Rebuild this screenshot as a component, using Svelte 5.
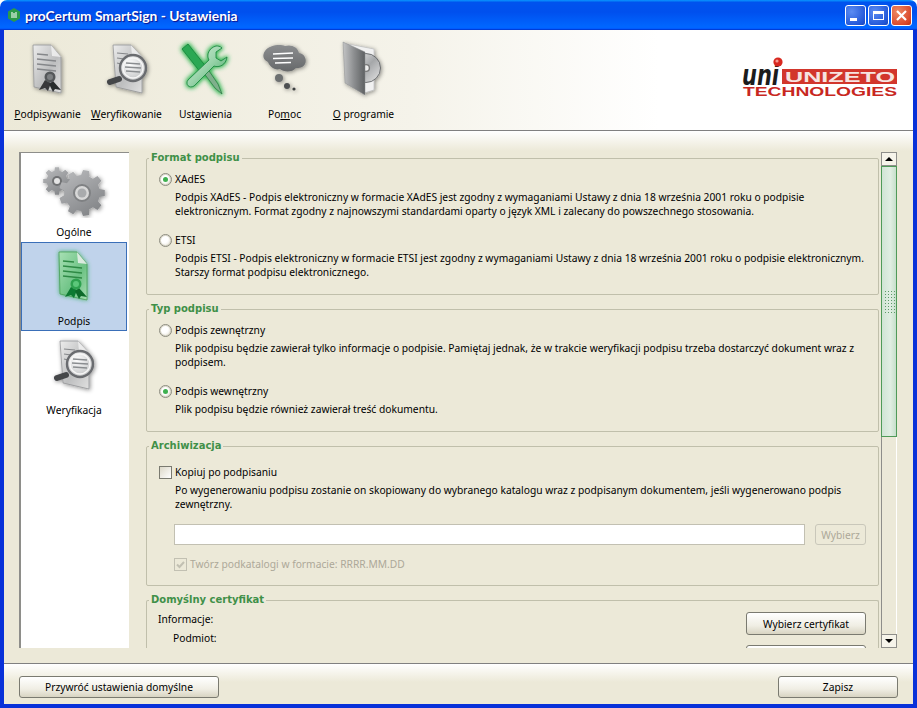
<script>
  const tools = [
    { pre: '', key: 'P', post: 'odpisywanie', icon: 'sign' },
    { pre: '', key: 'W', post: 'eryfikowanie', icon: 'verify' },
    { pre: 'Ust', key: 'a', post: 'wienia', icon: 'tools' },
    { pre: 'Po', key: 'm', post: 'oc', icon: 'help' },
    { pre: '', key: 'O', post: ' programie', icon: 'about' }
  ];

  const sideItems = [
    { label: 'Ogólne', icon: 'gears' },
    { label: 'Podpis', icon: 'sign', selected: true },
    { label: 'Weryfikacja', icon: 'verify' }
  ];

  // Builds a cog outline from tooth count and radii
  function gear(cx, cy, n, outer, inner) {
    const step = (Math.PI * 2) / n;
    const pts = [];
    for (let i = 0; i < n; i++) {
      const a = i * step;
      const at = (r, d) => {
        const x = cx + r * Math.cos(a + d * step);
        const y = cy + r * Math.sin(a + d * step);
        return x.toFixed(1) + ' ' + y.toFixed(1);
      };
      pts.push(at(inner, -0.32), at(outer, -0.19), at(outer, 0.19), at(inner, 0.32));
    }
    return 'M' + pts.join('L') + 'Z';
  }
</script>

{#snippet page(fill, edge, line)}
  <path d="M15 5H33L43 17V53L16 47Z" fill="url(#{fill})" stroke={edge} stroke-width="0.7" />
  <path d="M33 5L34 16L43 17Z" fill="#f4f4f4" opacity="0.8" />
  <g stroke={line} stroke-width="1.3" fill="none">
    <path d="M19 14L30 15" />
    <path d="M19 19L38 21" />
    <path d="M19 24L38 26" />
    <path d="M19 29L38 31" />
  </g>
{/snippet}

{#snippet signIcon(green)}
  <svg class="ico" viewBox="0 0 60 60" width="60" height="60">
    <g filter={green ? 'url(#glow)' : 'url(#shadow)'}>
      {@render page(green ? 'pageGreen' : 'pageGrey', green ? '#3f9a4e' : '#8b8d8f', green ? '#2f8a45' : '#85878a')}
      <path d="M27 40L21 50L27 48L30 51L33 43Z" fill={green ? '#0e7a32' : '#37393b'} />
      <path d="M35 41L43 50L37 49L35 52L31 44Z" fill={green ? '#0a6a2a' : '#2b2d2f'} />
      <circle cx="32" cy="37" r="5.5" fill={green ? '#2ea150' : '#55585a'} />
      <circle cx="32" cy="37" r="3" fill={green ? '#5cc77a' : '#7d8082'} />
    </g>
  </svg>
{/snippet}

{#snippet verifyIcon()}
  <svg class="ico" viewBox="0 0 60 60" width="60" height="60">
    <g filter="url(#shadow)">
      <path d="M16 5H34L45 17V53L19 47Z" fill="url(#pageGrey)" stroke="#8b8d8f" stroke-width="0.7" />
      <path d="M34 5L35 16L45 17Z" fill="#f4f4f4" opacity="0.8" />
      <g stroke="#85878a" stroke-width="1.2" fill="none">
        <path d="M20 13L31 14" />
        <path d="M20 18L27 19" />
        <path d="M20 23L24 24" />
      </g>
      <path d="M22 39L13 42" stroke="#45474a" stroke-width="6" stroke-linecap="round" />
      <circle cx="36" cy="28" r="13" fill="url(#lens)" stroke="#6a6c6f" stroke-width="2.4" />
      <circle cx="36" cy="28" r="10" fill="none" stroke="#f6f6f6" stroke-width="1.4" />
      <g stroke="#8a8d90" stroke-width="1.3" fill="none">
        <path d="M29 23L43 24" />
        <path d="M28 27L44 28" />
        <path d="M29 31L43 32" />
      </g>
    </g>
  </svg>
{/snippet}

{#snippet toolsIcon()}
  <svg class="ico" viewBox="0 0 60 60" width="60" height="60">
    <g filter="url(#glowWide)">
      <path d="M12 4L6 9L25 33L31 28Z" fill="#2aa853" stroke="#17813b" stroke-width="0.8" />
      <path d="M29 30L31 28L42 44L46 54L39 48L27 32Z" fill="#7fb08c" stroke="#2d7c45" stroke-width="0.8" />
      <path d="M40 6C33 8 30 15 33 20L12 40C9 44 13 49 18 46L38 26C43 28 50 25 51 17L45 21L40 18L40 12L46 8C44 6 42 6 40 6Z" fill="url(#toolGreen)" stroke="#17813b" stroke-width="0.8" />
    </g>
  </svg>
{/snippet}

{#snippet helpIcon()}
  <svg class="ico" viewBox="0 0 60 60" width="60" height="60">
    <g filter="url(#shadow)">
      <path d="M10 11C14 5 25 4 30 6C36 4 43 7 44 13C50 14 52 20 50 24C48 28 44 28 41 28C37 33 28 32 25 29C20 31 14 26 13 22C8 20 7 15 10 11Z" fill="url(#cloud)" />
      <g stroke="#fff" stroke-width="1.5" fill="none">
        <path d="M18 14L38 13" />
        <path d="M18 18.5L38 18" />
        <path d="M20 23L36 22.5" />
      </g>
      <circle cx="24" cy="38" r="4" fill="#6d6f71" />
      <circle cx="32" cy="46" r="3" fill="#4d4f51" />
      <circle cx="39" cy="49" r="1.6" fill="#3d3f41" />
    </g>
  </svg>
{/snippet}

{#snippet aboutIcon()}
  <svg class="ico" viewBox="0 0 60 60" width="60" height="60">
    <g filter="url(#shadow)">
      <path d="M14 4L40 9V50L30 53Z" fill="#f1f1f1" stroke="#a9abad" stroke-width="0.5" />
      <circle cx="32" cy="28" r="14.5" fill="url(#disc)" stroke="#55585a" stroke-width="0.8" />
      <circle cx="32" cy="28" r="3.4" fill="#eee" stroke="#777" stroke-width="1.4" />
      <path d="M9 2L31 12V55L11 43Z" fill="url(#folder)" stroke="#8b8d8f" stroke-width="0.5" />
    </g>
  </svg>
{/snippet}

{#snippet gearsIcon()}
  <svg class="ico" viewBox="0 0 72 60" width="72" height="60">
    <g filter="url(#shadow)">
      <path d={gear(19, 23, 8, 14, 10.5)} fill="url(#gearFill)" />
      <circle cx="19" cy="23" r="5" fill="#6f7173" />
      <circle cx="19" cy="23" r="3" fill="#e4e4e4" />
      <path d={gear(44, 35, 9, 23, 18)} fill="url(#gearFill)" />
      <circle cx="44" cy="35" r="8" fill="#d8d8d8" stroke="#7f8183" stroke-width="2" />
      <circle cx="44" cy="35" r="4.5" fill="#a9abad" />
    </g>
  </svg>
{/snippet}

<div class="window">
  <svg class="defs" width="0" height="0" aria-hidden="true">
    <defs>
      <linearGradient id="pageGrey" x1="0" y1="0" x2="1" y2="1">
        <stop offset="0" stop-color="#ececec" />
        <stop offset="0.55" stop-color="#bdbebf" />
        <stop offset="1" stop-color="#e0e0e0" />
      </linearGradient>
      <linearGradient id="pageGreen" x1="0" y1="0" x2="1" y2="1">
        <stop offset="0" stop-color="#a8e0b4" />
        <stop offset="0.6" stop-color="#6cc284" />
        <stop offset="1" stop-color="#a6dcb2" />
      </linearGradient>
      <radialGradient id="lens" cx="0.4" cy="0.35" r="0.8">
        <stop offset="0" stop-color="#ffffff" />
        <stop offset="1" stop-color="#b4b6b8" />
      </radialGradient>
      <linearGradient id="toolGreen" x1="0" y1="0" x2="1" y2="1">
        <stop offset="0" stop-color="#d6eedb" />
        <stop offset="0.5" stop-color="#9ad4ab" />
        <stop offset="1" stop-color="#3aa25c" />
      </linearGradient>
      <linearGradient id="cloud" x1="0" y1="0" x2="0" y2="1">
        <stop offset="0" stop-color="#8b8d8f" />
        <stop offset="1" stop-color="#66686a" />
      </linearGradient>
      <linearGradient id="disc" x1="0" y1="0" x2="1" y2="1">
        <stop offset="0" stop-color="#f2f2f2" />
        <stop offset="0.5" stop-color="#a5a7a9" />
        <stop offset="1" stop-color="#e6e6e6" />
      </linearGradient>
      <linearGradient id="folder" x1="0" y1="0" x2="1" y2="0">
        <stop offset="0" stop-color="#c3c4c5" />
        <stop offset="0.5" stop-color="#8c8e90" />
        <stop offset="1" stop-color="#5e6062" />
      </linearGradient>
      <linearGradient id="gearFill" x1="0" y1="0" x2="0.6" y2="1">
        <stop offset="0" stop-color="#bcbdbf" />
        <stop offset="1" stop-color="#85878a" />
      </linearGradient>
      <filter id="shadow" x="-30%" y="-30%" width="160%" height="160%">
        <feGaussianBlur in="SourceAlpha" stdDeviation="2" result="b" />
        <feFlood flood-color="#000" flood-opacity="0.45" />
        <feComposite in2="b" operator="in" />
        <feOffset dx="1" dy="1" />
        <feMerge>
          <feMergeNode />
          <feMergeNode in="SourceGraphic" />
        </feMerge>
      </filter>
      <filter id="glow" x="-30%" y="-30%" width="160%" height="160%">
        <feGaussianBlur in="SourceAlpha" stdDeviation="2" result="b" />
        <feFlood flood-color="#1fa63f" flood-opacity="0.8" />
        <feComposite in2="b" operator="in" />
        <feMerge>
          <feMergeNode />
          <feMergeNode in="SourceGraphic" />
        </feMerge>
      </filter>
      <filter id="glowWide" x="-30%" y="-30%" width="160%" height="160%">
        <feMorphology in="SourceAlpha" operator="dilate" radius="1" />
        <feGaussianBlur stdDeviation="2.2" result="b" />
        <feFlood flood-color="#20b045" flood-opacity="0.95" />
        <feComposite in2="b" operator="in" />
        <feMerge>
          <feMergeNode />
          <feMergeNode in="SourceGraphic" />
        </feMerge>
      </filter>
    </defs>
  </svg>

  <header class="titlebar">
    <svg class="appicon" viewBox="0 0 14 14" width="14" height="14">
      <path d="M7 0L13 3.5V10.5L7 14L1 10.5V3.5Z" fill="#2c9a4a" />
      <path d="M5 4V10M7 5V10M9 4V10" stroke="#e6f2e6" stroke-width="1.2" />
    </svg>
    <span class="title">proCertum SmartSign - Ustawienia</span>
    <div class="controls">
      <div class="wbtn">
        <span class="min"></span>
      </div>
      <div class="wbtn">
        <span class="max"></span>
      </div>
      <div class="wbtn close">
        <svg viewBox="0 0 13 13" width="13" height="13">
          <path d="M2 2L11 11M11 2L2 11" stroke="#fff" stroke-width="2.2" />
        </svg>
      </div>
    </div>
  </header>

  <div class="inner">
    <nav class="toolbar">
      {#each tools as t}
        <div class="tool">
          {#if t.icon === 'sign'}
            {@render signIcon(false)}
          {:else if t.icon === 'verify'}
            {@render verifyIcon()}
          {:else if t.icon === 'tools'}
            {@render toolsIcon()}
          {:else if t.icon === 'help'}
            {@render helpIcon()}
          {:else}
            {@render aboutIcon()}
          {/if}
          <span class="tool-label">{t.pre}<u>{t.key}</u>{t.post}</span>
        </div>
      {/each}
      <div class="logo">
        <svg viewBox="0 0 158 42" width="158" height="42">
          <rect x="41" y="12" width="115" height="15" fill="#d2362c" />
          <text x="1" y="28" class="uni" textLength="37" lengthAdjust="spacingAndGlyphs">uni</text>
          <circle cx="37" cy="5" r="4.6" fill="#d8281f" />
          <circle cx="36" cy="4" r="1.6" fill="#f59a90" />
          <text x="44" y="25" class="uz" textLength="110" lengthAdjust="spacingAndGlyphs">UNIZETO</text>
          <text x="2" y="39" class="tech" textLength="154" lengthAdjust="spacingAndGlyphs">TECHNOLOGIES</text>
        </svg>
      </div>
    </nav>

    <div class="content">
      <aside class="side">
        {#each sideItems as s}
          <div class="side-item" class:selected={s.selected}>
            {#if s.icon === 'gears'}
              {@render gearsIcon()}
            {:else if s.icon === 'sign'}
              {@render signIcon(true)}
            {:else}
              {@render verifyIcon()}
            {/if}
            <span>{s.label}</span>
          </div>
        {/each}
      </aside>

      <main class="scroller">
        <fieldset>
          <legend>Format podpisu</legend>
          <div class="row first"><span class="radio on"></span>XAdES</div>
          <p>Podpis XAdES - Podpis elektroniczny w formacie XAdES jest zgodny z wymaganiami Ustawy z dnia 18 września 2001 roku o podpisie<br />elektronicznym. Format zgodny z najnowszymi standardami oparty o język XML i zalecany do powszechnego stosowania.</p>
          <div class="row next"><span class="radio"></span>ETSI</div>
          <p>Podpis ETSI - Podpis elektroniczny w formacie ETSI jest zgodny z wymaganiami Ustawy z dnia 18 września 2001 roku o podpisie elektronicznym.<br />Starszy format podpisu elektronicznego.</p>
        </fieldset>

        <fieldset>
          <legend>Typ podpisu</legend>
          <div class="row first"><span class="radio"></span>Podpis zewnętrzny</div>
          <p>Plik podpisu będzie zawierał tylko informacje o podpisie. Pamiętaj jednak, że w trakcie weryfikacji podpisu trzeba dostarczyć dokument wraz z<br />podpisem.</p>
          <div class="row next"><span class="radio on"></span>Podpis wewnętrzny</div>
          <p>Plik podpisu będzie również zawierał treść dokumentu.</p>
        </fieldset>

        <fieldset class="arch">
          <legend>Archiwizacja</legend>
          <div class="row check-row"><span class="check"></span>Kopiuj po podpisaniu</div>
          <p>Po wygenerowaniu podpisu zostanie on skopiowany do wybranego katalogu wraz z podpisanym dokumentem, jeśli wygenerowano podpis<br />zewnętrzny.</p>
          <div class="path-row">
            <div class="input"></div>
            <div class="btn disabled small">Wybierz</div>
          </div>
          <div class="row sub disabled-text">
            <span class="check ticked">
              <svg viewBox="0 0 13 13" width="13" height="13">
                <path d="M3 6.5L5.5 9L10 4" fill="none" stroke="#c2c0b2" stroke-width="2" />
              </svg>
            </span>Twórz podkatalogi w formacie: RRRR.MM.DD
          </div>
        </fieldset>

        <fieldset class="cert">
          <legend>Domyślny certyfikat</legend>
          <div class="cert-grid">
            <div class="cert-labels">
              <div>Informacje:</div>
              <div class="indent">Podmiot:</div>
            </div>
            <div class="cert-btns">
              <div class="btn cert-btn">Wybierz certyfikat</div>
              <div class="btn cert-btn"></div>
            </div>
          </div>
        </fieldset>
      </main>

      <div class="scrollbar">
        <div class="arrow"><span class="up"></span></div>
        <div class="thumb"><span class="grip"></span></div>
        <div class="track"></div>
        <div class="arrow"><span class="down"></span></div>
      </div>
    </div>

    <footer class="footer">
      <div class="btn reset">Przywróć ustawienia domyślne</div>
      <div class="btn save">Zapisz</div>
    </footer>
  </div>
</div>

<style>
  :global(body) {
    margin: 0;
    background: #fff;
  }
  .window {
    width: 917px;
    height: 708px;
    display: flex;
    flex-direction: column;
    font-family: "Noto Sans", sans-serif;
    font-size: 10.25px;
    color: #000;
    overflow: hidden;
  }
  .defs {
    position: absolute;
  }
  .titlebar {
    height: 30px;
    flex: none;
    display: flex;
    align-items: center;
    box-sizing: border-box;
    padding: 0 5px 0 7px;
    border-radius: 7px 7px 0 0;
    background: linear-gradient(#0997ff 0, #0053ee 8%, #0050ee 40%, #0066ff 88%, #0066ff 93%, #005bff 95%, #003dd7 96%, #003dd7 100%);
  }
  .appicon {
    margin-right: 5px;
  }
  .title {
    font-family: Lato, sans-serif;
    font-weight: 700;
    font-size: 13.8px;
    color: #fff;
    text-shadow: 1px 1px 1px #0f1089;
    margin-left: -1px;
  }
  .controls {
    margin-left: auto;
    display: flex;
    gap: 2px;
  }
  .wbtn {
    width: 21px;
    height: 21px;
    box-sizing: border-box;
    border: 1px solid #fff;
    border-radius: 3px;
    background: radial-gradient(circle at 30% 30%, #5b8cf2, #2257d8 75%, #1b46b8);
    display: flex;
    align-items: center;
    justify-content: center;
  }
  .wbtn.close {
    background: radial-gradient(circle at 30% 30%, #ee8a64, #d9472a 75%, #b93210);
  }
  .min {
    width: 7px;
    height: 3px;
    background: #fff;
    margin: 8px 5px 0 0;
  }
  .max {
    width: 11px;
    height: 9px;
    box-sizing: border-box;
    border: 1px solid #fff;
    border-top-width: 3px;
  }
  .inner {
    flex: 1;
    min-height: 0;
    display: flex;
    flex-direction: column;
    border: solid #0831d9;
    border-width: 0 4px 4px 4px;
  }
  .toolbar {
    height: 101px;
    flex: none;
    box-sizing: border-box;
    display: flex;
    padding: 10px 0 0 4px;
    border-bottom: 1px solid #808080;
    background: linear-gradient(90deg, #ece9d8 0, #f5f3ea 45%, #fff 72%);
  }
  .tool {
    width: 79px;
    display: flex;
    flex-direction: column;
    align-items: center;
    white-space: nowrap;
  }
  .tool-label {
    margin-top: 7px;
    line-height: 14px;
  }
  .logo {
    margin: 17px 0 0 auto;
    padding-right: 14px;
  }
  .uni {
    font-family: "DejaVu Sans", sans-serif;
    font-weight: 700;
    font-style: italic;
    font-size: 28px;
    fill: #1c1c1c;
  }
  .uz {
    font-family: "Liberation Sans", sans-serif;
    font-weight: 700;
    font-size: 14.5px;
    fill: #f6e4e0;
  }
  .tech {
    font-family: "Liberation Sans", sans-serif;
    font-weight: 700;
    font-size: 12.5px;
    fill: #c8281f;
  }
  .content {
    flex: 1;
    min-height: 0;
    display: flex;
    align-items: flex-start;
    box-sizing: border-box;
    padding: 21px 0 0 15px;
    background: linear-gradient(#fff 0, #ece9d8 20px);
  }
  .side {
    width: 110px;
    height: 496px;
    flex: none;
    box-sizing: border-box;
    background: #fff;
    border-top: 1px solid #8e8e8a;
    border-left: 2px solid #8e8e8a;
    padding-right: 2px;
  }
  .side-item {
    height: 89px;
    box-sizing: border-box;
    border: 1px solid transparent;
    display: flex;
    flex-direction: column;
    align-items: center;
    padding-top: 4px;
  }
  .side-item span {
    margin-top: 7px;
    line-height: 14px;
  }
  .side-item.selected {
    background: #c0d3eb;
    border-color: #3a6fb8;
  }
  .ico {
    display: block;
    flex: none;
  }
  .scroller {
    width: 733px;
    height: 497px;
    flex: none;
    margin: -1px 0 0 17px;
    overflow: hidden;
  }
  fieldset {
    margin: 0 0 7px;
    padding: 0 12px 15px;
    border: 1px solid #c0bfab;
    border-radius: 2px;
    box-sizing: border-box;
  }
  .arch {
    padding-bottom: 14px;
  }
  legend {
    padding: 0 2px;
    margin-left: -10px;
    font-family: "DejaVu Sans", sans-serif;
    font-size: 10px;
    font-weight: 700;
    color: #3f9048;
    line-height: 14px;
  }
  .row {
    display: flex;
    align-items: center;
    gap: 3px;
    height: 14px;
    white-space: nowrap;
  }
  .row.first {
    margin-top: 7px;
  }
  .row.next {
    margin-top: 15px;
  }
  .row.check-row {
    margin-top: 12px;
  }
  .row.sub {
    margin: 12px 0 0 15px;
  }
  p {
    margin: 4px 0 0 16px;
    line-height: 14px;
    white-space: nowrap;
  }
  .radio {
    width: 13px;
    height: 13px;
    box-sizing: border-box;
    border: 1px solid #8c8c80;
    border-radius: 50%;
    background: radial-gradient(circle at 35% 35%, #fff 40%, #dcd8c8);
    box-shadow: inset 0 0 0 1px #d8d5c6;
    display: flex;
    align-items: center;
    justify-content: center;
  }
  .radio.on::after {
    content: "";
    width: 5px;
    height: 5px;
    border-radius: 50%;
    background: #3fb04f;
  }
  .check {
    width: 13px;
    height: 13px;
    box-sizing: border-box;
    border: 1px solid #7a7a70;
    background: linear-gradient(135deg, #dcd8c8, #fff);
    display: block;
  }
  .check.ticked {
    border-color: #c2c0b2;
    background: #ece9d8;
  }
  .check.ticked svg {
    display: block;
    margin: -1px;
  }
  .disabled-text {
    color: #aca899;
  }
  .path-row {
    display: flex;
    gap: 10px;
    margin: 13px 0 0 15px;
  }
  .input {
    width: 631px;
    height: 21px;
    box-sizing: border-box;
    border: 1px solid #c2c0b2;
    background: #fff;
  }
  .btn {
    box-sizing: border-box;
    border: 1px solid #7a7a70;
    border-radius: 3px;
    background: linear-gradient(#fff, #f0eee4 60%, #d8d4c2);
    display: flex;
    align-items: center;
    justify-content: center;
    white-space: nowrap;
  }
  .btn.small {
    width: 51px;
    height: 21px;
  }
  .btn.disabled {
    color: #aca899;
    border-color: #c9c7ba;
    background: #ece9d8;
  }
  .cert {
    height: 60px;
    padding-bottom: 0;
    border-bottom: none;
    margin: 0;
  }
  .cert-grid {
    display: flex;
    justify-content: space-between;
    margin-top: 5px;
    height: 60px;
  }
  .cert-labels {
    line-height: 14px;
    margin-left: -1px;
  }
  .indent {
    margin: 5px 0 0 15px;
  }
  .cert-btns {
    width: 120px;
  }
  .cert-btn {
    height: 23px;
    margin-bottom: 10px;
  }
  .scrollbar {
    width: 16px;
    height: 496px;
    margin-left: 2px;
    flex: none;
    box-sizing: border-box;
    display: flex;
    flex-direction: column;
    border-left: 1px solid #8e8e8a;
    border-right: 1px solid #fff;
  }
  .arrow {
    height: 14px;
    flex: none;
    box-sizing: border-box;
    border: 1px solid #8e8e8a;
    background: #f6f4ea;
    display: flex;
    align-items: center;
    justify-content: center;
    margin: 0 -1px;
  }
  .up {
    border: 4px solid transparent;
    border-top: 0;
    border-bottom-color: #000;
  }
  .down {
    border: 4px solid transparent;
    border-bottom: 0;
    border-top-color: #000;
  }
  .thumb {
    height: 271px;
    flex: none;
    box-sizing: border-box;
    border: 1px solid #4f9a58;
    background: linear-gradient(90deg, #d0e4d4, #e0eee2 60%, #c6dfcb);
    display: flex;
    align-items: center;
    justify-content: center;
    margin: 0 -1px;
  }
  .grip {
    width: 11px;
    height: 24px;
    background-image: radial-gradient(#5d9a68 0.7px, transparent 0.8px);
    background-size: 3px 3px;
  }
  .track {
    flex: 1;
  }
  .footer {
    height: 41px;
    flex: none;
    box-sizing: border-box;
    display: flex;
    justify-content: space-between;
    padding: 12px 15px 6px;
    border-top: 1px solid #808080;
    background: linear-gradient(#fff 0, #ece9d8 18px);
  }
  .reset {
    width: 200px;
  }
  .save {
    width: 120px;
  }
</style>
